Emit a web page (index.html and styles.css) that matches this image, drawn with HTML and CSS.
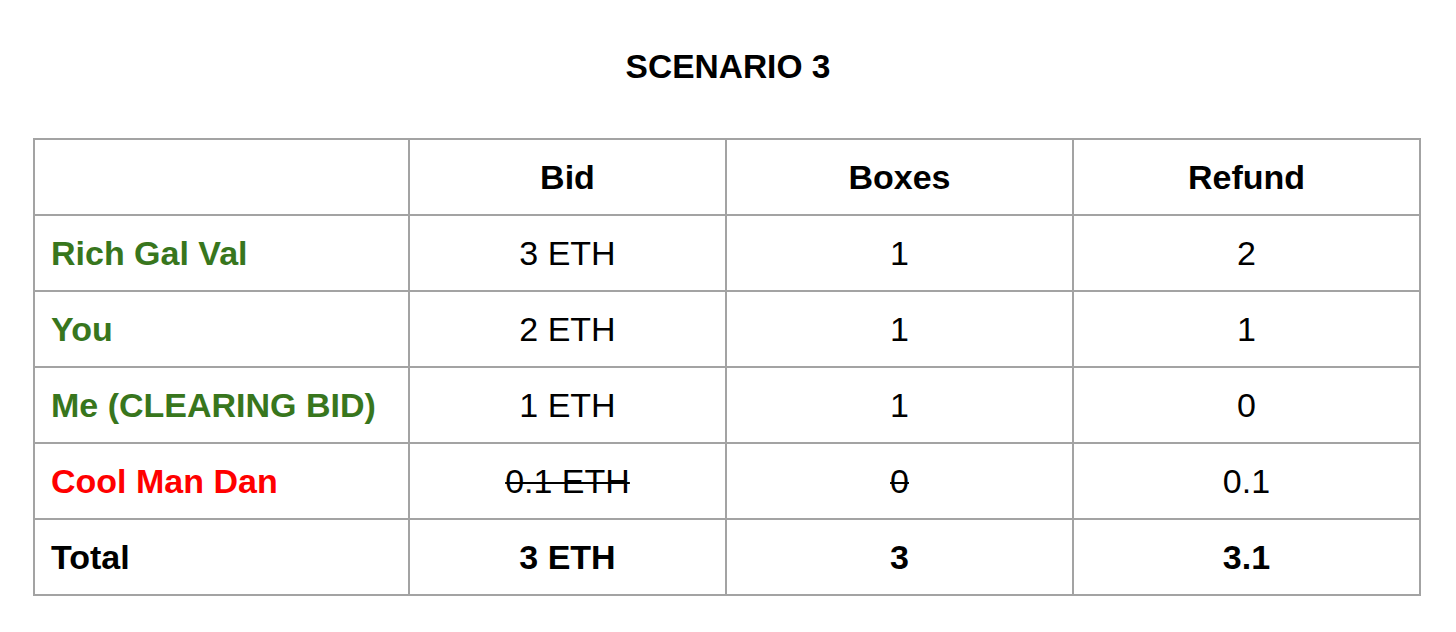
FILE: index.html
```html
<!DOCTYPE html>
<html>
<head>
<meta charset="utf-8">
<link rel="stylesheet" href="styles.css">
</head>
<body>
<div class="page">
  <h1 class="title">SCENARIO 3</h1>
  <table class="grid">
    <colgroup>
      <col class="c1"><col class="c2"><col class="c3"><col class="c4">
    </colgroup>
    <tr class="head">
      <td></td><td class="num">Bid</td><td class="num">Boxes</td><td class="num">Refund</td>
    </tr>
    <tr>
      <td class="name green">Rich Gal Val</td><td class="num">3 ETH</td><td class="num">1</td><td class="num">2</td>
    </tr>
    <tr>
      <td class="name green">You</td><td class="num">2 ETH</td><td class="num">1</td><td class="num">1</td>
    </tr>
    <tr>
      <td class="name green">Me (CLEARING BID)</td><td class="num">1 ETH</td><td class="num">1</td><td class="num">0</td>
    </tr>
    <tr>
      <td class="name red">Cool Man Dan</td><td class="num"><s>0.1 ETH</s></td><td class="num"><s>0</s></td><td class="num">0.1</td>
    </tr>
    <tr class="total">
      <td class="name">Total</td><td class="num">3 ETH</td><td class="num">3</td><td class="num">3.1</td>
    </tr>
  </table>
</div>
</body>
</html>
```
FILE: styles.css
```css
html, body {
  margin: 0;
  padding: 0;
  background: #ffffff;
}
.page {
  font-family: "Liberation Sans", Arial, sans-serif;
  color: #000000;
  padding: 48px 0 0 33px;
}
.title {
  margin: 0 0 53px 0;
  font-size: 33.5px;
  line-height: 37px;
  font-weight: bold;
  text-align: center;
  padding-right: 33px;
}
.grid {
  border-collapse: collapse;
  table-layout: fixed;
  width: 1386px;
  font-size: 34px;
}
.c1 { width: 375px; }
.c2 { width: 317px; }
.c3 { width: 347px; }
.c4 { width: 347px; }
.grid td {
  border: 2px solid #a3a3a3;
  height: 74px;
  padding: 0 16px;
  vertical-align: middle;
  line-height: 38px;
  white-space: nowrap;
}
.num { text-align: center; }
.name { font-weight: bold; }
.head td { font-weight: bold; }
.total td { font-weight: bold; }
.green { color: #38761d; }
.red { color: #ff0000; }
s { text-decoration-thickness: 2px; }
```
